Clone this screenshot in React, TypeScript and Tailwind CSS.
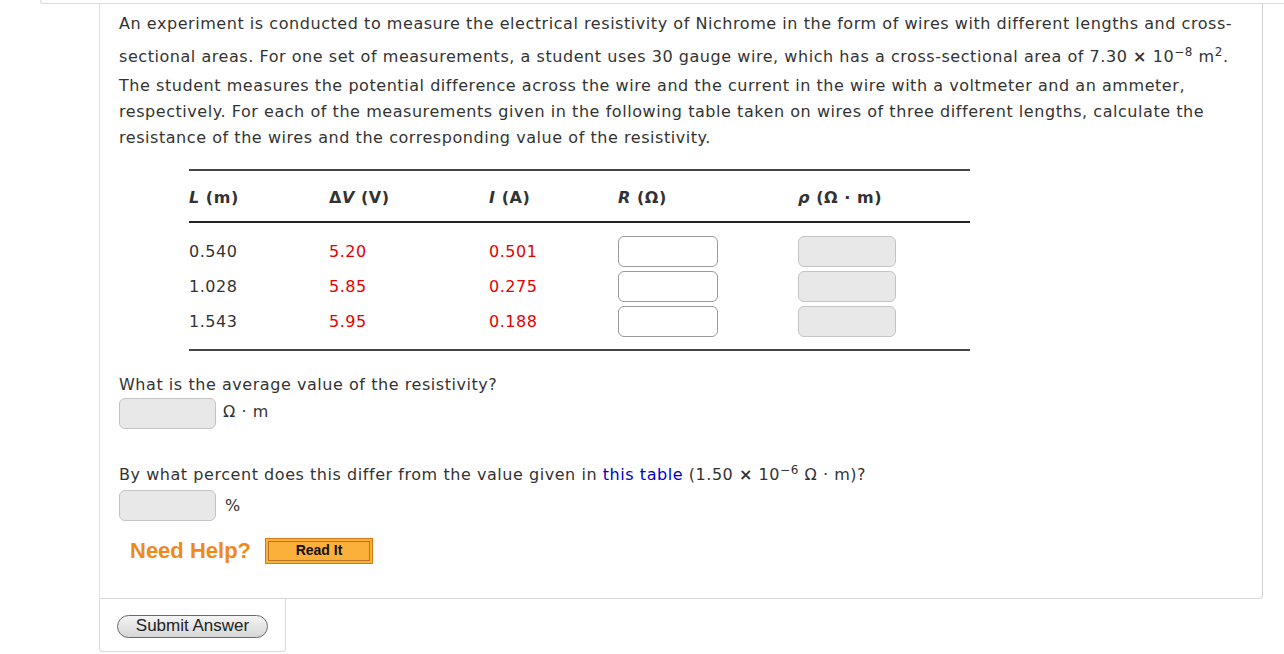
import React from 'react';

const cols = ['w-[140px]', 'w-[160px]', 'w-[129px]', 'w-[180px]', 'flex-1'];

const rows = [
  ['0.540', '5.20', '0.501'],
  ['1.028', '5.85', '0.275'],
  ['1.543', '5.95', '0.188'],
];

function Box({ gray, w = 'w-[100px]' }: { gray?: boolean; w?: string }) {
  return (
    <div
      className={`${w} h-[31px] rounded-[6px] border ${
        gray ? 'bg-[#e8e8e8] border-[#c4c4c4]' : 'bg-white border-[#9a9a9a]'
      }`}
    />
  );
}

function Sup({ children }: { children: React.ReactNode }) {
  return <sup className="text-[12px] leading-none">{children}</sup>;
}

export default function App() {
  return (
    <div className="w-[1284px] h-[654px] overflow-hidden bg-white text-[#333] font-['DejaVu_Sans',Verdana,sans-serif] text-[16px] tracking-[0.55px]">
      {/* top strip */}
      <div className="ml-[40px] h-[4px] border-l border-b border-[#dcdcdc] rounded-bl-[3px]" />

      {/* question panel */}
      <div className="ml-[99px] w-[1164px] border-l border-r border-b border-l-[#e2e2e2] border-r-[#d0d0d0] border-b-[#d8d8d8] rounded-br-[4px] pl-[19px] pt-[7px] pb-[31px]">
        <div className="leading-[26px] whitespace-nowrap">
          <div className="h-[26px]">
            An experiment is conducted to measure the electrical resistivity of Nichrome in the form of wires with
            different lengths and cross-
          </div>
          <div className="h-[26px] mt-[7px]">
            sectional areas. For one set of measurements, a student uses 30 gauge wire, which has a cross-sectional
            area of 7.30 <b>×</b> 10<Sup>−8</Sup> m<Sup>2</Sup>.
          </div>
          <div className="h-[26px] mt-[3px]">
            The student measures the potential difference across the wire and the current in the wire with a
            voltmeter and an ammeter,
          </div>
          <div className="h-[26px]">
            respectively. For each of the measurements given in the following table taken on wires of three
            different lengths, calculate the
          </div>
          <div className="h-[26px]">
            resistance of the wires and the corresponding value of the resistivity.
          </div>
        </div>

        {/* table */}
        <div className="ml-[70px] w-[781px] mt-[18px] border-t-2 border-b-2 border-[#444]">
          <div className="flex items-center h-[52px] pt-[4px] border-b-2 border-[#222] font-bold">
            <div className={cols[0]}>
              <i>L</i> (m)
            </div>
            <div className={cols[1]}>
              Δ<i>V</i> (V)
            </div>
            <div className={cols[2]}>
              <i>I</i> (A)
            </div>
            <div className={cols[3]}>
              <i>R</i> (Ω)
            </div>
            <div className={cols[4]}>
              <i>ρ</i> (Ω · m)
            </div>
          </div>
          <div className="pt-[13px] pb-[12px] flex flex-col gap-[4px]">
            {rows.map((r, i) => (
              <div key={i} className="flex items-center h-[31px]">
                <div className={cols[0]}>{r[0]}</div>
                <div className={`${cols[1]} text-[#e60000]`}>{r[1]}</div>
                <div className={`${cols[2]} text-[#e60000]`}>{r[2]}</div>
                <div className={cols[3]}>
                  <Box />
                </div>
                <div className={cols[4]}>
                  <Box gray w="w-[98px]" />
                </div>
              </div>
            ))}
          </div>
        </div>

        {/* average */}
        <p className="mt-[22px] h-[24px] leading-[24px]">What is the average value of the resistivity?</p>
        <div className="flex items-center gap-[7px] mt-[1px]">
          <Box gray w="w-[97px]" />
          <span className="-mt-[3px]">Ω · m</span>
        </div>

        {/* percent */}
        <p className="mt-[34px] h-[24px] leading-[24px] whitespace-nowrap">
          By what percent does this differ from the value given in{' '}
          <span className="text-[#0000cc]">this table</span> (1.50 <b>×</b> 10<Sup>−6</Sup> Ω · m)?
        </p>
        <div className="flex items-center gap-[9px] mt-[3px]">
          <Box gray w="w-[97px]" />
          <span>%</span>
        </div>

        {/* help */}
        <div className="flex items-center mt-[13px] ml-[11px] gap-[14px] tracking-normal">
          <span className="font-['Liberation_Sans',Arial,sans-serif] font-bold text-[22px] text-[#f0891c]">
            Need Help?
          </span>
          <div className="w-[108px] h-[26px] bg-[#fbb03b] border border-[#d77a16] p-[2px]">
            <div className="h-full border border-[#b9761e] flex items-center justify-center font-['Liberation_Sans',Arial,sans-serif] font-bold text-[14px] text-[#111]">
              Read It
            </div>
          </div>
        </div>
      </div>

      {/* submit */}
      <div className="ml-[99px] w-[187px] h-[53px] border-l border-r border-b border-[#dadada] rounded-b-[4px] pt-[15px] pl-[17px] tracking-normal">
        <button className="w-[151px] h-[23px] rounded-full border border-[#6a6a6a] bg-gradient-to-b from-[#f4f4f4] to-[#d6d6d6] font-['Liberation_Sans',Arial,sans-serif] text-[17px] text-[#222] leading-[20px]">
          Submit Answer
        </button>
      </div>
    </div>
  );
}
